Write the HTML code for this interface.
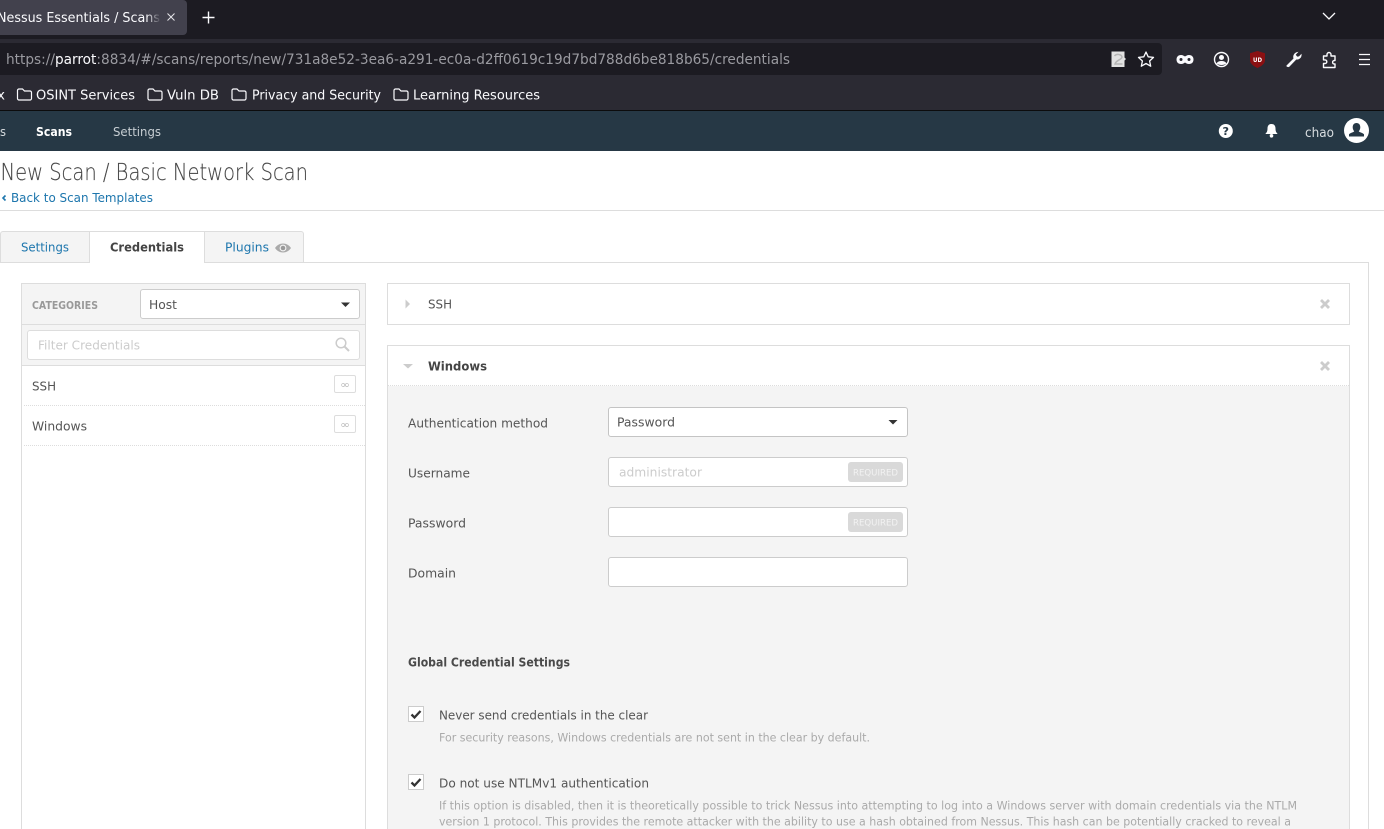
<!DOCTYPE html>
<html lang="en">
<head>
<meta charset="utf-8">
<title>Nessus Essentials / Scans</title>
<style>
html,body{margin:0;padding:0;background:#fff;width:1384px;height:829px;overflow:hidden}
#p{position:relative;width:1384px;height:829px;overflow:hidden;background:#fff}
.b{position:absolute;box-sizing:border-box}
svg{position:absolute;left:0;top:0}
text{font-family:"DejaVu Sans","Liberation Sans",sans-serif;white-space:pre}
.c{fill:#555;font-size:12.8px}
.f{fill:#fbfbfe;font-size:13.5px}
.d{fill:#aaa;font-size:11.8px}
.l{fill:#1d76ad;font-size:12.8px}
</style>
</head>
<body>
<div id="p">
<div class="b" style="left:0;top:0;width:1384px;height:39px;background:#1c1b22"></div>
<div class="b" style="left:-5px;top:0;width:192px;height:35px;background:#42414d;border-radius:4px"></div>
<div class="b" style="left:0;top:39px;width:1384px;height:72px;background:#2b2a33;border-bottom:1px solid #0c0c0d"></div>
<div class="b" style="left:-5px;top:43px;width:1167px;height:32px;background:#1c1b22;border-radius:4px"></div>
<div class="b" style="left:0;top:111px;width:1384px;height:40px;background:#263845"></div>
<div class="b" style="left:0;top:210px;width:1384px;height:1px;background:#ddd"></div>

<div class="b" style="left:-1px;top:262px;width:1370px;height:580px;border:1px solid #ddd"></div>
<div class="b" style="left:0;top:231px;width:90px;height:32px;background:#f4f4f4;border:1px solid #ddd;border-radius:3px 0 0 0"></div>
<div class="b" style="left:89px;top:231px;width:116px;height:32px;background:#fff;border:1px solid #ddd;border-bottom:0"></div>
<div class="b" style="left:204px;top:231px;width:100px;height:32px;background:#f4f4f4;border:1px solid #ddd;border-radius:0 3px 0 0"></div>

<div class="b" style="left:21px;top:283px;width:345px;height:560px;border:1px solid #ddd;background:#fff"></div>
<div class="b" style="left:22px;top:284px;width:343px;height:82px;background:#f4f4f4;border-bottom:1px solid #ddd"></div>
<div class="b" style="left:22px;top:324px;width:343px;height:1px;background:#ddd"></div>
<div class="b" style="left:140px;top:289px;width:220px;height:30px;background:#fff;border:1px solid #ccc;border-radius:3px"></div>
<div class="b" style="left:27px;top:330px;width:333px;height:30px;background:#fff;border:1px solid #ddd;border-radius:3px"></div>
<div class="b" style="left:334px;top:375px;width:22px;height:18px;background:#fff;border:1px solid #ddd;border-radius:2px"></div>
<div class="b" style="left:334px;top:415px;width:22px;height:18px;background:#fff;border:1px solid #ddd;border-radius:2px"></div>
<div class="b" style="left:24px;top:405px;width:341px;height:1px;border-top:1px dotted #ddd"></div>
<div class="b" style="left:24px;top:445px;width:341px;height:1px;border-top:1px dotted #ddd"></div>

<div class="b" style="left:387px;top:283px;width:963px;height:42px;background:#fff;border:1px solid #ddd"></div>
<div class="b" style="left:387px;top:345px;width:963px;height:500px;background:#f4f4f4;border:1px solid #ddd"></div>
<div class="b" style="left:388px;top:346px;width:961px;height:40px;background:#fff;border-bottom:1px dotted #ddd"></div>

<div class="b" style="left:608px;top:407px;width:300px;height:30px;background:#fff;border:1px solid #c4c4c4;border-radius:3px"></div>
<div class="b" style="left:608px;top:457px;width:300px;height:30px;background:#fff;border:1px solid #ccc;border-radius:3px"></div>
<div class="b" style="left:608px;top:507px;width:300px;height:30px;background:#fff;border:1px solid #ccc;border-radius:3px"></div>
<div class="b" style="left:608px;top:557px;width:300px;height:30px;background:#fff;border:1px solid #ccc;border-radius:3px"></div>
<div class="b" style="left:848px;top:462px;width:55px;height:20px;background:#d9d9d9;border-radius:3px"></div>
<div class="b" style="left:848px;top:512px;width:55px;height:20px;background:#d9d9d9;border-radius:3px"></div>
<div class="b" style="left:408px;top:706px;width:16px;height:16px;background:#fff;border:1px solid #ccc"></div>
<div class="b" style="left:408px;top:774px;width:16px;height:16px;background:#fff;border:1px solid #ccc"></div>

<svg width="1384" height="829" viewBox="0 0 1384 829" xmlns="http://www.w3.org/2000/svg">
<defs><linearGradient id="fd"><stop offset="0" stop-color="#42414d" stop-opacity="0"/><stop offset="1" stop-color="#42414d"/></linearGradient></defs>

<!-- browser chrome text -->
<text x="-3" y="22" class="f" textLength="163" lengthAdjust="spacingAndGlyphs">Nessus Essentials / Scans</text>
<rect x="146" y="8" width="15" height="20" fill="url(#fd)"/>
<path d="M167.500 13.500l7 7m0-7l-7 7" stroke="#e6e6ea" stroke-width="1" fill="none"/>
<path d="M208.500 11.500v12M202.500 17.500h12" stroke="#fbfbfe" stroke-width="1.400" fill="none"/>
<path d="M1323 13l6 6 6-6" stroke="#fbfbfe" stroke-width="1.300" fill="none"/>
<text x="6" y="64" font-size="14" fill="#9a9aa0" textLength="784" lengthAdjust="spacingAndGlyphs">https://<tspan fill="#fbfbfe">parrot</tspan>:8834/#/scans/reports/new/731a8e52-3ea6-a291-ec0a-d2ff0619c19d7bd788d6be818b65/credentials</text>

<text x="-3" y="99.500" class="f" textLength="8" lengthAdjust="spacingAndGlyphs">x</text>
<g fill="none" stroke="#fbfbfe" stroke-width="1.200">
<path d="M17.500 90.500a1.500 1.500 0 0 1 1.500-1.500h3.500l2 2h5.500a1.500 1.500 0 0 1 1.500 1.500v6a1.500 1.500 0 0 1-1.500 1.500h-11a1.500 1.500 0 0 1-1.500-1.500z"/>
<path d="M148 90.500a1.500 1.500 0 0 1 1.500-1.500h3.500l2 2h5.500a1.500 1.500 0 0 1 1.500 1.500v6a1.500 1.500 0 0 1-1.500 1.500h-11a1.500 1.500 0 0 1-1.500-1.500z"/>
<path d="M232 90.500a1.500 1.500 0 0 1 1.500-1.500h3.500l2 2h5.500a1.500 1.500 0 0 1 1.500 1.500v6a1.500 1.500 0 0 1-1.500 1.500h-11a1.500 1.500 0 0 1-1.500-1.500z"/>
<path d="M394 90.500a1.500 1.500 0 0 1 1.500-1.500h3.500l2 2h5.500a1.500 1.500 0 0 1 1.500 1.500v6a1.500 1.500 0 0 1-1.500 1.500h-11a1.500 1.500 0 0 1-1.500-1.500z"/>
</g>
<text x="36" y="99.500" class="f" textLength="99" lengthAdjust="spacingAndGlyphs">OSINT Services</text>
<text x="167" y="99.500" class="f" textLength="52" lengthAdjust="spacingAndGlyphs">Vuln DB</text>
<text x="252" y="99.500" class="f" textLength="129" lengthAdjust="spacingAndGlyphs">Privacy and Security</text>
<text x="413" y="99.500" class="f" textLength="127" lengthAdjust="spacingAndGlyphs">Learning Resources</text>

<!-- toolbar icons -->
<path d="M1111.500 51.500h13v6l1.500 1.500-1.500 1.500v6.500h-13z" fill="#e2e2e2"/>
<path d="M1114.500 56a4 3 0 0 1 7.500 1c0 2.500-6.500 3.500-7 7h7.500" fill="none" stroke="#b5b5b5" stroke-width="1.500"/>
<path d="M1146 52l2.200 4.800 5.300.600-3.900 3.600 1.100 5.200-4.700-2.700-4.700 2.700 1.100-5.200-3.900-3.600 5.300-.600z" fill="none" stroke="#fbfbfe" stroke-width="1.300" stroke-linejoin="round"/>
<path d="M1181 55c2 0 3 1 4 1.500 1-.5 2-1.500 4-1.500 3 0 4.500 2 4.500 4.500s-1.500 4.500-4.500 4.500c-2 0-3-1-4-1.500-1 .5-2 1.500-4 1.500-3 0-4.500-2-4.500-4.500s1.500-4.500 4.500-4.500z" fill="#fbfbfe"/>
<circle cx="1181" cy="59.500" r="1.500" fill="#2b2a33"/><circle cx="1189" cy="59.500" r="1.500" fill="#2b2a33"/>
<circle cx="1221.500" cy="59.500" r="7" fill="none" stroke="#fbfbfe" stroke-width="1.400"/>
<circle cx="1221.500" cy="57.500" r="2.500" fill="#fbfbfe"/>
<path d="M1216.500 63.500c1-2 3-2.500 5-2.500s4 .5 5 2.500c-1.500 1-3 1.500-5 1.500s-3.500-.5-5-1.500z" fill="#fbfbfe"/>
<path d="M1257.500 51l7.500 2.300v6.700c0 3.800-3.500 6-7.500 8-4-2-7.500-4.200-7.500-8v-6.700z" fill="#8a1012"/>
<text x="1253" y="62" font-size="6.500" font-weight="700" fill="#fff" textLength="9" lengthAdjust="spacingAndGlyphs">UD</text>
<path d="M1286.500 65.500l7-7c-.8-2.500.2-5 3-6.300l2-.4-2.800 3 1.500 1.800 1.800-.2 2.500-2.700c.5 3.300-1.500 6-5.200 5.800l-7 7.200c-1.300 1-3.300-.2-2.800-1.200z" fill="#fbfbfe"/>
<path d="M1323.500 56h3.500v-1.500a2 2 0 0 1 4 0v1.500h4v4.500h-1a1.800 1.800 0 0 0 0 3.500h1v3.500h-11.500v-4h1.500a1.800 1.800 0 0 0 0-3.600h-1.500z" fill="none" stroke="#fbfbfe" stroke-width="1.400" stroke-linejoin="round"/>
<path d="M1359 54.500h11M1359 59.500h11M1359 64.500h11" stroke="#fbfbfe" stroke-width="1.300" fill="none"/>

<!-- app nav -->
<text x="0" y="136" font-size="12.500" fill="#d5dadd" textLength="6" lengthAdjust="spacingAndGlyphs">s</text>
<text x="36" y="136" font-size="12" font-weight="700" fill="#fff" textLength="36" lengthAdjust="spacingAndGlyphs">Scans</text>
<text x="113" y="136" font-size="12.300" fill="#c7ced3" textLength="48" lengthAdjust="spacingAndGlyphs">Settings</text>
<circle cx="1225.800" cy="131" r="7" fill="#fff"/>
<text x="1222.500" y="135" font-size="10.500" font-weight="700" fill="#263845" textLength="6.500" lengthAdjust="spacingAndGlyphs">?</text>
<path d="M1271.500 124c2.800 0 4 2 4 4.500 0 3 .8 4 2.200 5.500h-12.400c1.400-1.500 2.200-2.500 2.200-5.500 0-2.500 1.200-4.500 4-4.500z" fill="#fff"/>
<circle cx="1271.500" cy="135.800" r="1.800" fill="#fff"/>
<text x="1305" y="137" font-size="13.500" fill="#d8dde0" textLength="29" lengthAdjust="spacingAndGlyphs">chao</text>
<circle cx="1356.500" cy="130.500" r="12.500" fill="#fff"/>
<path d="M1356.500 123c2.600 0 3.800 2 3.800 4.200 0 1.700-.7 3-1.500 4 .3 1 3.700 1.400 5.200 3v2.300h-15v-2.300c1.500-1.600 4.900-2 5.200-3-.8-1-1.500-2.300-1.500-4 0-2.200 1.200-4.200 3.800-4.200z" fill="#263845"/>

<!-- page heading -->
<text x="0.500" y="180" font-size="23.500" font-weight="200" fill="#444" stroke="#555" stroke-width="0.150" textLength="307.500" lengthAdjust="spacingAndGlyphs">New Scan / Basic Network Scan</text>
<path d="M5.500 195.500l-2.500 2.500 2.500 2.500" fill="none" stroke="#1d76ad" stroke-width="1.600"/>
<text x="11" y="202" class="l" textLength="142" lengthAdjust="spacingAndGlyphs">Back to Scan Templates</text>

<!-- tabs -->
<text x="21" y="251.500" class="l" textLength="48" lengthAdjust="spacingAndGlyphs">Settings</text>
<text x="110" y="251.500" font-size="12.800" font-weight="700" fill="#444" textLength="74" lengthAdjust="spacingAndGlyphs">Credentials</text>
<text x="225" y="251.500" class="l" textLength="44" lengthAdjust="spacingAndGlyphs">Plugins</text>
<path d="M275 248c2-3 5-4.500 8-4.500s6 1.500 8 4.500c-2 3-5 4.500-8 4.500s-6-1.500-8-4.500z" fill="#aaa"/>
<circle cx="283" cy="248" r="3.400" fill="#f4f4f4"/><circle cx="283" cy="248" r="2.300" fill="#999"/>

<!-- left panel -->
<text x="32" y="309" font-size="10.500" font-weight="700" fill="#999" textLength="66" lengthAdjust="spacingAndGlyphs">CATEGORIES</text>
<text x="149" y="309" class="c" textLength="28" lengthAdjust="spacingAndGlyphs">Host</text>
<path d="M341 302.500h9l-4.500 4.500z" fill="#333"/>
<text x="38" y="349.500" font-size="12.800" fill="#ccc" textLength="102" lengthAdjust="spacingAndGlyphs">Filter Credentials</text>
<circle cx="341" cy="343" r="4.800" fill="none" stroke="#ccc" stroke-width="1.500"/>
<path d="M344.500 346.500l4.500 4.500" stroke="#ccc" stroke-width="2" fill="none"/>
<text x="32" y="390.500" class="c" textLength="24" lengthAdjust="spacingAndGlyphs">SSH</text>
<text x="32" y="430.500" class="c" textLength="55" lengthAdjust="spacingAndGlyphs">Windows</text>
<text x="340" y="388" font-size="10" fill="#bbb" textLength="10" lengthAdjust="spacingAndGlyphs">∞</text>
<text x="340" y="428" font-size="10" fill="#bbb" textLength="10" lengthAdjust="spacingAndGlyphs">∞</text>

<!-- accordions -->
<path d="M405.500 299.500l4.500 4.500-4.500 4.500z" fill="#ccc"/>
<text x="428" y="308.500" class="c" textLength="24" lengthAdjust="spacingAndGlyphs">SSH</text>
<path d="M1321 300l8 8m0-8l-8 8" stroke="#ccc" stroke-width="2.800" fill="none"/>
<path d="M403 364h10l-5 4.500z" fill="#ccc"/>
<text x="428" y="370.500" font-size="12.800" font-weight="700" fill="#444" textLength="59" lengthAdjust="spacingAndGlyphs">Windows</text>
<path d="M1321 362l8 8m0-8l-8 8" stroke="#ccc" stroke-width="2.800" fill="none"/>

<!-- form -->
<text x="408" y="427.500" class="c" textLength="140" lengthAdjust="spacingAndGlyphs">Authentication method</text>
<text x="408" y="477.500" class="c" textLength="62" lengthAdjust="spacingAndGlyphs">Username</text>
<text x="408" y="527.500" class="c" textLength="58" lengthAdjust="spacingAndGlyphs">Password</text>
<text x="408" y="577.500" class="c" textLength="48" lengthAdjust="spacingAndGlyphs">Domain</text>
<text x="617" y="426.500" class="c" textLength="58" lengthAdjust="spacingAndGlyphs">Password</text>
<path d="M888.500 420h9l-4.500 4.500z" fill="#333"/>
<text x="619" y="476.500" font-size="12.800" fill="#ccc" textLength="83" lengthAdjust="spacingAndGlyphs">administrator</text>
<text x="853" y="475.500" font-size="9" fill="#f2f2f2" textLength="45" lengthAdjust="spacingAndGlyphs">REQUIRED</text>
<text x="853" y="525.500" font-size="9" fill="#f2f2f2" textLength="45" lengthAdjust="spacingAndGlyphs">REQUIRED</text>

<text x="408" y="666.500" font-size="12.800" font-weight="700" fill="#4a4a4a" textLength="162" lengthAdjust="spacingAndGlyphs">Global Credential Settings</text>
<path d="M411.500 714.500l3 3 6-6.500" fill="none" stroke="#333" stroke-width="2.300"/>
<text x="439" y="719.500" class="c" textLength="209" lengthAdjust="spacingAndGlyphs">Never send credentials in the clear</text>
<text x="439" y="741.500" class="d" textLength="431" lengthAdjust="spacingAndGlyphs">For security reasons, Windows credentials are not sent in the clear by default.</text>
<path d="M411.500 782.500l3 3 6-6.500" fill="none" stroke="#333" stroke-width="2.300"/>
<text x="439" y="787.500" class="c" textLength="210" lengthAdjust="spacingAndGlyphs">Do not use NTLMv1 authentication</text>
<text x="439" y="809.500" class="d" textLength="858" lengthAdjust="spacingAndGlyphs">If this option is disabled, then it is theoretically possible to trick Nessus into attempting to log into a Windows server with domain credentials via the NTLM</text>
<text x="439" y="825.500" class="d" textLength="852" lengthAdjust="spacingAndGlyphs">version 1 protocol. This provides the remote attacker with the ability to use a hash obtained from Nessus. This hash can be potentially cracked to reveal a</text>
</svg>
</div>
</body>
</html>
